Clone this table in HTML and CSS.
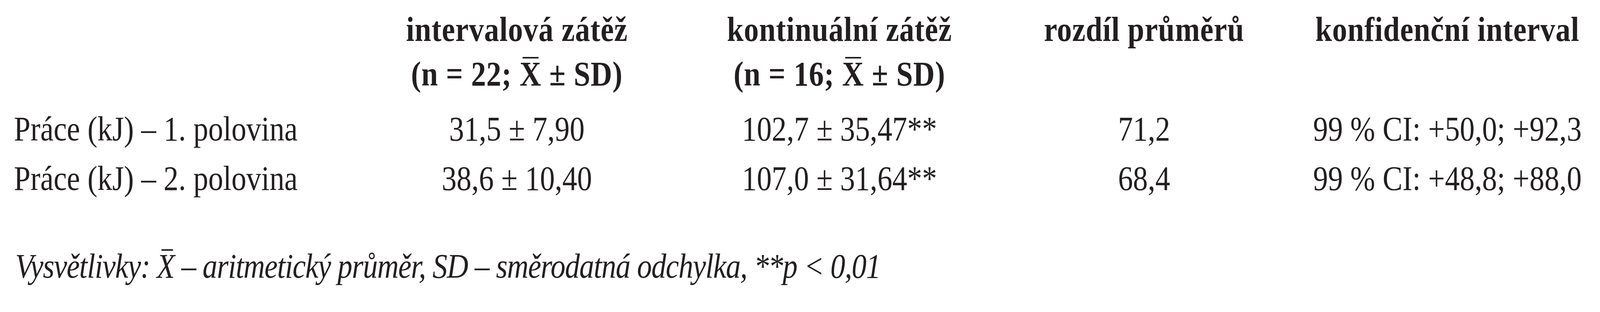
FILE: index.html
```html
<!DOCTYPE html>
<html lang="cs">
<head>
<meta charset="utf-8">
<title>Tabulka – intervalová a kontinuální zátěž</title>
<link rel="stylesheet" href="styles.css">
</head>
<body>
<div class="frame">
  <div class="page">
    <div class="table">
      <div class="row head">
        <div class="cell"></div>
        <div class="cell">intervalová zátěž<br>(n = 22; <span class="xbar">X</span> ± SD)</div>
        <div class="cell">kontinuální zátěž<br>(n = 16; <span class="xbar">X</span> ± SD)</div>
        <div class="cell diff">rozdíl průměrů</div>
        <div class="cell">konfidenční interval</div>
      </div>
      <div class="row data first">
        <div class="cell label">Práce (kJ) – 1. polovina</div>
        <div class="cell">31,5 ± 7,90</div>
        <div class="cell">102,7 ± 35,47**</div>
        <div class="cell diff">71,2</div>
        <div class="cell">99 % CI: +50,0; +92,3</div>
      </div>
      <div class="row data">
        <div class="cell label">Práce (kJ) – 2. polovina</div>
        <div class="cell">38,6 ± 10,40</div>
        <div class="cell">107,0 ± 31,64**</div>
        <div class="cell diff">68,4</div>
        <div class="cell">99 % CI: +48,8; +88,0</div>
      </div>
    </div>
    <p class="note">Vysvětlivky: <span class="xbar italic">X</span> – aritmetický průměr, SD – směrodatná odchylka, **p &lt; 0,01</p>
  </div>
</div>
</body>
</html>
```

FILE: styles.css
```css
html, body {
  overflow: hidden;
}
body {
  margin: 0;
  background: #ffffff;
  color: #231f20;
  font-family: "Liberation Serif", "Times New Roman", serif;
  font-size: 88px;
}
.frame {
  width: 100%;
  height: 800px;
  overflow: hidden;
}
.page {
  width: 4727px;
  height: 800px;
  box-sizing: border-box;
  padding: 19px 0 0 41px;
  transform-origin: 0 0;
}
@media (max-width: 4400px) {
  .page {
    transform: scaleX(0.86653);
  }
}
.table {
  display: flex;
  flex-direction: column;
}
.row {
  display: grid;
  grid-template-columns: 1011px 950px 956px 868px 900px;
}
.cell {
  text-align: center;
  white-space: nowrap;
}
.cell.label {
  text-align: left;
}
.cell.diff {
  padding-right: 24px;
}
.head .cell {
  font-weight: bold;
  line-height: 114px;
  letter-spacing: 1px;
}
.data .cell {
  line-height: 127px;
}
.data.first {
  margin-top: 20px;
}
.xbar {
  position: relative;
  display: inline-block;
  line-height: 1;
}
.xbar::before {
  content: "";
  position: absolute;
  top: 0;
  left: 9px;
  right: 9px;
  height: 4px;
  background: currentColor;
}
.xbar.italic::before {
  left: 14px;
  right: 4px;
}
.note {
  margin: 98px 0 0 4px;
  font-style: italic;
  line-height: 127px;
  letter-spacing: -1.6px;
  white-space: nowrap;
}
```
